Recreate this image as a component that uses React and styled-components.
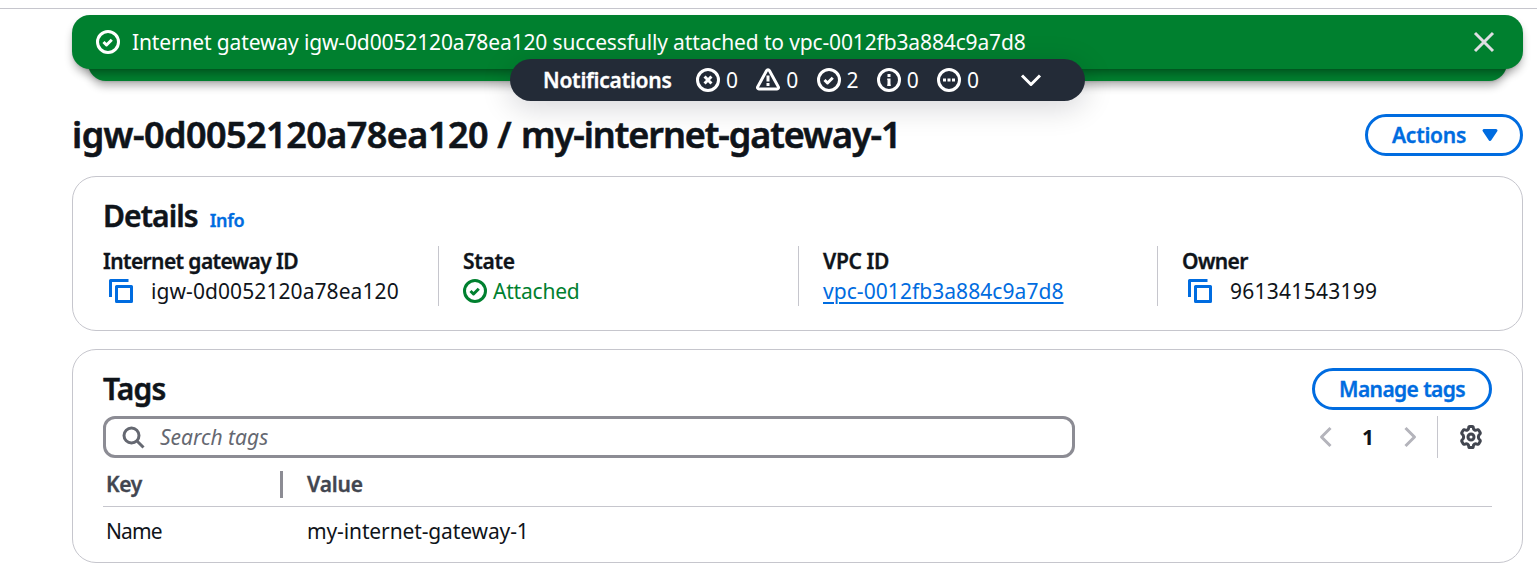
import React from "react";
import styled, { createGlobalStyle } from "styled-components";

const Global = createGlobalStyle`
  * { box-sizing: border-box; }
  body { margin: 0; background: #fff; }
`;

const Page = styled.div`
  width: 1537px;
  height: 582px;
  overflow: hidden;
  padding-top: 8px;
  font-family: "Noto Sans", "Open Sans", sans-serif;
  font-size: 21px;
  line-height: 30px;
  color: #0f141a;
`;

const Main = styled.main`
  border-top: 1px solid #c6c6cd;
  padding: 6px 14px 0 72px;
  display: flex;
  flex-direction: column;
`;

const Text = styled.span`
  white-space: nowrap;
  letter-spacing: ${(p) => p.$ls || 0}px;
  font-weight: ${(p) => (p.$bold ? 600 : "inherit")};
  -webkit-text-stroke: ${(p) => (p.$bold ? "0.35px currentColor" : "inherit")};
`;

const Icon = styled.svg`
  flex: none;
  display: block;
  width: 24px;
  height: 24px;
  fill: none;
  stroke: currentColor;
  stroke-width: 2;
  stroke-linejoin: round;
`;

const FlashStack = styled.section`
  position: relative;
  height: 66px;
`;

const FlashBehind = styled.div`
  position: absolute;
  inset: 24px 16px 0 16px;
  background: #00802f;
  border-radius: 18px;
  box-shadow: 0 6px 9px -1px rgba(0, 0, 0, 0.3), 0 1px 2px rgba(0, 0, 0, 0.1);
`;

const Flash = styled.div`
  position: relative;
  display: flex;
  align-items: center;
  gap: 12px;
  height: 54px;
  padding: 0 27px 0 24px;
  background: #00802f;
  color: #fff;
  border-radius: 18px;
  box-shadow: 0 6px 9px -1px rgba(0, 0, 0, 0.3), 0 1px 2px rgba(0, 0, 0, 0.1);
`;

const Dismiss = styled.button`
  margin-left: auto;
  padding: 0;
  border: 0;
  background: none;
  color: #dedee3;
`;

const NotificationBar = styled.div`
  position: absolute;
  z-index: 2;
  left: 438px;
  top: 44px;
  width: 575px;
  height: 42px;
  padding: 0 42px 0 33px;
  display: flex;
  align-items: center;
  justify-content: space-between;
  border-radius: 21px;
  background: #232b37;
  color: #fff;
  box-shadow: 0 6px 30px 1px rgba(0, 7, 22, 0.16);
`;

const Summary = styled.div`
  display: grid;
  align-items: center;
  grid-template-columns: 153px repeat(5, 60.25px);
`;

const Count = styled.div`
  display: flex;
  align-items: center;
  gap: 6px;
`;

const TitleRow = styled.header`
  display: flex;
  justify-content: space-between;
  align-items: center;
  height: 42px;
  margin-top: 33px;
`;

const Title = styled.h1`
  margin: 0;
  font-size: 36px;
  font-weight: 600;
  line-height: 42px;
  white-space: nowrap;
  -webkit-text-stroke: 0.6px currentColor;
`;

const Heading = styled.h2`
  margin: 0;
  font-size: 30px;
  font-weight: 600;
  line-height: 36px;
  letter-spacing: ${(p) => p.$ls || 0}px;
  -webkit-text-stroke: 0.5px currentColor;
`;

const Button = styled.button`
  display: flex;
  align-items: center;
  gap: 12px;
  width: ${(p) => p.$width}px;
  height: 42px;
  padding: 0 0 0 24px;
  border: 3px solid #006ce0;
  border-radius: 21px;
  background: #fff;
  color: #006ce0;
  font: inherit;
`;

const Card = styled.section`
  height: ${(p) => p.$height}px;
  margin-top: ${(p) => p.$gap}px;
  padding: 18px 30px 0;
  border: 1px solid #c6c6cd;
  border-radius: 24px;
`;

const CardHead = styled.div`
  display: flex;
  align-items: ${(p) => (p.$baseline ? "baseline" : "center")};
  justify-content: ${(p) => (p.$spread ? "space-between" : "flex-start")};
  gap: 12px;
  padding-top: ${(p) => (p.$baseline ? 3 : 0)}px;
`;

const InfoLink = styled.a`
  color: #006ce0;
  font-size: 18px;
  font-weight: 600;
  letter-spacing: ${(p) => p.$ls || 0}px;
  -webkit-text-stroke: 0.3px currentColor;
`;

const Fields = styled.div`
  display: grid;
  grid-template-columns: 335px 360px 359px 1fr;
  margin-top: 11px;
`;

const Field = styled.div`
  height: 60px;
  & + & {
    border-left: 1px solid #c6c6cd;
    padding-left: 24px;
  }
`;

const FieldValue = styled.div`
  display: flex;
  align-items: center;
  gap: ${(p) => p.$gap || 6}px;
  padding-left: ${(p) => p.$indent || 0}px;
  color: ${(p) => p.$color || "inherit"};
`;

const BlueIcon = styled(Icon)`
  color: #006ce0;
`;

const VpcLink = styled.a`
  color: #006ce0;
  white-space: nowrap;
  text-decoration: underline;
  text-decoration-thickness: 2px;
  text-underline-offset: 3px;
  letter-spacing: ${(p) => p.$ls || 0}px;
`;

const Tools = styled.div`
  display: flex;
  justify-content: space-between;
  margin-top: 6px;
`;

const Search = styled.div`
  display: flex;
  align-items: center;
  gap: 15px;
  width: 972px;
  height: 42px;
  padding-left: 15px;
  border: 3px solid #8c8c94;
  border-radius: 12px;
  color: #656871;
  font-style: italic;
`;

const Pager = styled.div`
  display: flex;
  align-items: center;
  color: #b4b4bb;
`;

const PageNumber = styled.span`
  width: 60px;
  text-align: center;
  font-weight: 700;
  color: #0f141a;
`;

const Settings = styled.div`
  display: flex;
  align-items: center;
  height: 42px;
  margin-left: 15px;
  padding: 0 9px 0 21px;
  border-left: 1px solid #c6c6cd;
  color: #424650;
`;

const Row = styled.div`
  display: grid;
  grid-template-columns: 177px 1fr;
  align-items: center;
  height: ${(p) => p.$height}px;
  padding: ${(p) => (p.$head ? 4 : 0)}px 0 0 3px;
  color: ${(p) => (p.$head ? "#424650" : "#0f141a")};
  border-bottom: ${(p) => (p.$head ? "1px solid #c6c6cd" : "0")};
`;

const Cell = styled.div`
  padding-left: ${(p) => (p.$second ? 24 : 0)}px;
`;

const HeadCell = styled(Cell)`
  display: flex;
  justify-content: space-between;
  align-items: center;
`;

const Splitter = styled.i`
  width: 3px;
  height: 27px;
  background: #8c8c94;
`;

const Check = () => (
  <Icon viewBox="0 0 16 16">
    <circle cx="8" cy="8" r="7" />
    <path d="m5 8 2 2 3.52-3.52" />
  </Icon>
);

const Copy = () => (
  <BlueIcon viewBox="0 0 16 16">
    <path d="M5 5h10v10H5z" />
    <path d="M1 12V1h12" />
  </BlueIcon>
);

const statusIcons = [
  <Icon key="e" viewBox="0 0 16 16">
    <circle cx="8" cy="8" r="7" />
    <path d="m5.700 5.700 4.600 4.600M10.300 5.700l-4.600 4.600" />
  </Icon>,
  <Icon key="w" viewBox="0 0 16 16">
    <path d="M7.1 1.700a1 1 0 0 1 1.800 0l6 10.900a.95.95 0 0 1-.85 1.400H1.950a.95.95 0 0 1-.85-1.400l6-10.900Z" />
    <path d="M8 5v4M8 10v2" />
  </Icon>,
  <Check key="s" />,
  <Icon key="i" viewBox="0 0 16 16">
    <circle cx="8" cy="8" r="7" />
    <path d="M7 4h2v2H7zM6.800 7H9v4h.2v1H6.800v-1H7V8h-.2z" fill="currentColor" stroke="none" />
  </Icon>,
  <Icon key="p" viewBox="0 0 16 16">
    <circle cx="8" cy="8" r="7" />
    <path d="M4 8h2M7 8h2M10 8h2" />
  </Icon>,
];
const counts = [0, 0, 2, 0, 0];

export default function App() {
  return (
    <Page>
      <Global />
      <Main>
        <FlashStack>
          <FlashBehind />
          <Flash>
            <Check />
            <Text $ls={-0.135}>Internet gateway igw-0d0052120a78ea120 successfully attached to vpc-0012fb3a884c9a7d8</Text>
            <Dismiss aria-label="Dismiss">
              <Icon viewBox="0 0 16 16">
                <path d="m2 2 12 12M14 2 2 14" />
              </Icon>
            </Dismiss>
          </Flash>
          <NotificationBar>
            <Summary>
              <Text $bold $ls={-0.25}>Notifications</Text>
              {counts.map((n, i) => (
                <Count key={i}>
                  {statusIcons[i]}
                  <Text>{n}</Text>
                </Count>
              ))}
            </Summary>
            <Icon viewBox="0 0 16 16">
              <path d="m2 5 6 6 6-6" />
            </Icon>
          </NotificationBar>
        </FlashStack>

        <TitleRow>
          <Title>
            <Text $ls={-0.55}>igw-0d0052120a78ea120</Text>
            {" / "}
            <Text $ls={-1.06}>my-internet-gateway-1</Text>
          </Title>
          <Button $width={158}>
            <Text $bold $ls={-0.25}>Actions</Text>
            <Icon viewBox="0 0 16 16">
              <path d="M4 5h8l-4 6-4-6Z" fill="currentColor" />
            </Icon>
          </Button>
        </TitleRow>

        <Card $height={155} $gap={20}>
          <CardHead $baseline>
            <Heading $ls={-0.9}>Details</Heading>
            <InfoLink $ls={-0.35}>Info</InfoLink>
          </CardHead>
          <Fields>
            <Field>
              <Text $bold $ls={-0.6}>Internet gateway ID</Text>
              <FieldValue $gap={18} $indent={6}>
                <Copy />
                <Text $ls={0.08}>igw-0d0052120a78ea120</Text>
              </FieldValue>
            </Field>
            <Field>
              <Text $bold $ls={-0.3}>State</Text>
              <FieldValue $color="#00802f">
                <Check />
                <Text $ls={-0.2}>Attached</Text>
              </FieldValue>
            </Field>
            <Field>
              <Text $bold $ls={-0.35}>VPC ID</Text>
              <FieldValue>
                <VpcLink $ls={0.06}>vpc-0012fb3a884c9a7d8</VpcLink>
              </FieldValue>
            </Field>
            <Field>
              <Text $bold $ls={-0.6}>Owner</Text>
              <FieldValue $gap={18} $indent={6}>
                <Copy />
                <Text $ls={0.26}>961341543199</Text>
              </FieldValue>
            </Field>
          </Fields>
        </Card>

        <Card $height={214} $gap={18}>
          <CardHead $spread>
            <Heading $ls={-0.8}>Tags</Heading>
            <Button $width={180}>
              <Text $bold $ls={-0.6}>Manage tags</Text>
            </Button>
          </CardHead>
          <Tools>
            <Search>
              <Icon viewBox="0 0 16 16">
                <circle cx="7" cy="7" r="5" />
                <path d="m15 15-4.5-4.5" />
              </Icon>
              <Text>Search tags</Text>
            </Search>
            <Pager>
              <Icon viewBox="0 0 16 16">
                <path d="m11 2-6 6 6 6" />
              </Icon>
              <PageNumber>1</PageNumber>
              <Icon viewBox="0 0 16 16">
                <path d="m5 2 6 6-6 6" />
              </Icon>
              <Settings>
                <Icon viewBox="0 0 16 16">
                  <circle cx="8" cy="8" r="2" />
                  <path d="M7.200 1h1.600a.7.7 0 0 1 .7.7c0 1.500 1.300 2.200 2.600 1.500a.8.8 0 0 1 1.100.3l.9 1.500a.8.8 0 0 1-.3 1.100c-1.200.8-1.200 3 0 3.800a.8.8 0 0 1 .3 1.100l-.9 1.500a.8.8 0 0 1-1.100.3c-1.300-.7-2.600 0-2.600 1.500a.7.7 0 0 1-.7.7H7.200a.7.7 0 0 1-.7-.7c0-1.500-1.300-2.200-2.600-1.500a.8.8 0 0 1-1.100-.3L1.900 11a.8.8 0 0 1 .3-1.100c1.200-.8 1.200-3 0-3.800A.8.8 0 0 1 1.900 5l.9-1.500a.8.8 0 0 1 1.100-.3c1.300.7 2.600 0 2.600-1.500a.7.7 0 0 1 .7-.7Z" />
                </Icon>
              </Settings>
            </Pager>
          </Tools>
          <Row $head $height={49}>
            <HeadCell>
              <Text $bold $ls={-0.3}>Key</Text>
              <Splitter />
            </HeadCell>
            <Cell $second>
              <Text $bold $ls={-0.2}>Value</Text>
            </Cell>
          </Row>
          <Row $height={48}>
            <Cell>
              <Text $ls={-0.9}>Name</Text>
            </Cell>
            <Cell $second>
              <Text $ls={-0.12}>my-internet-gateway-1</Text>
            </Cell>
          </Row>
        </Card>
      </Main>
    </Page>
  );
}
